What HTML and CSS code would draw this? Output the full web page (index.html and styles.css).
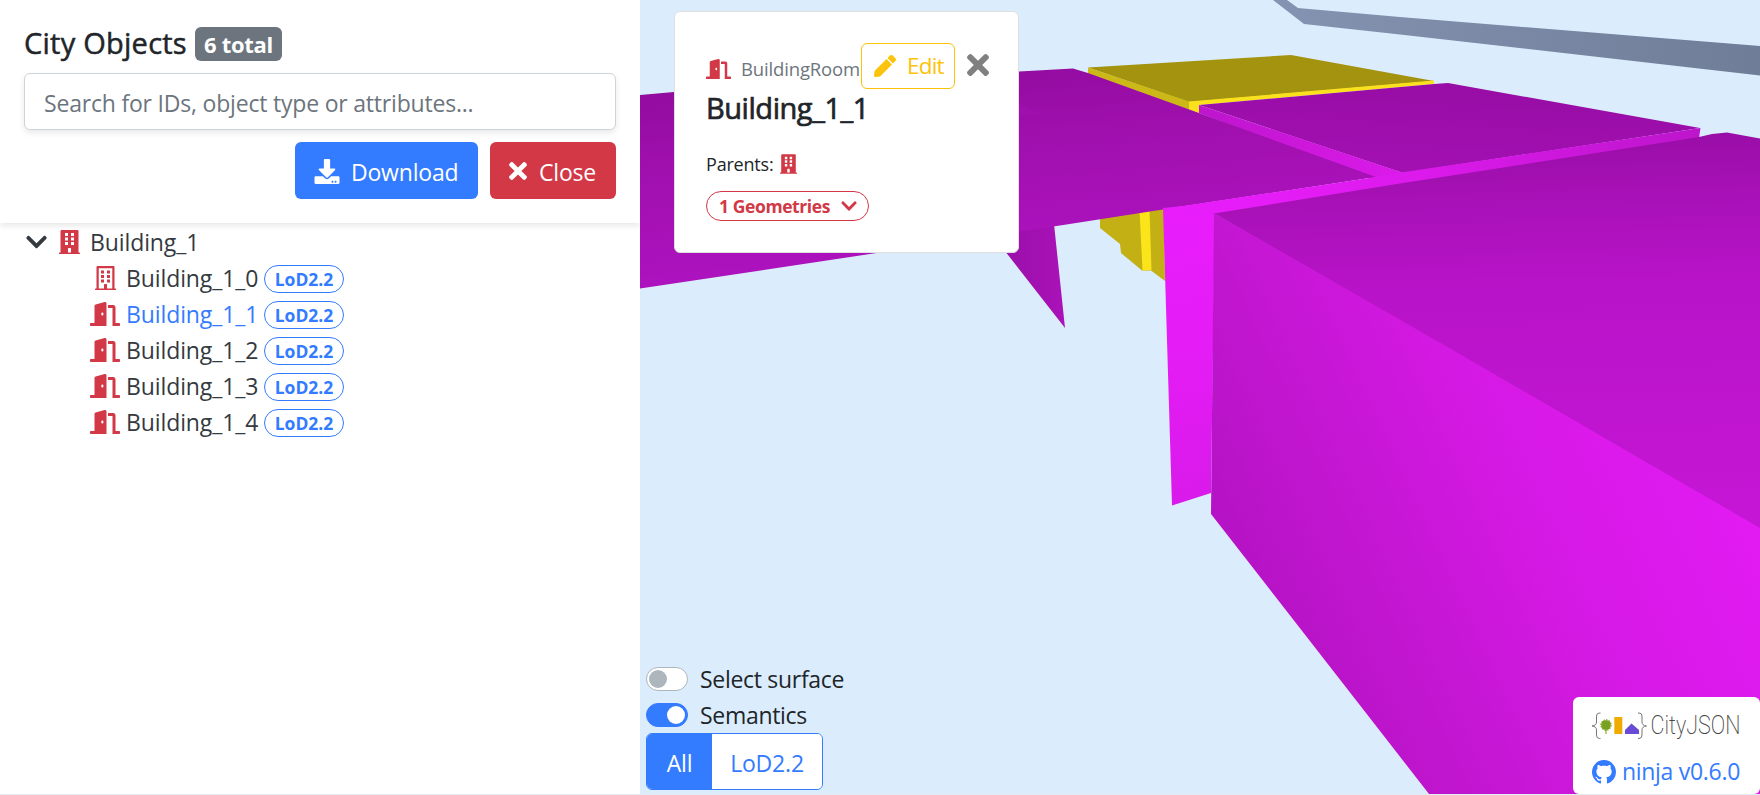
FILE: index.html
```html
<!DOCTYPE html>
<html lang="en">
<head>
<meta charset="utf-8">
<title>ninja</title>
<link rel="stylesheet" href="styles.css">
</head>
<body>
<svg class="defs" width="0" height="0">
  <symbol id="chevron" viewBox="0 0 448 512"><path d="M207.029 381.476L12.686 187.132c-9.373-9.373-9.373-24.569 0-33.941l22.667-22.667c9.357-9.357 24.522-9.375 33.901-.04L224 284.505l154.745-154.021c9.379-9.335 24.544-9.317 33.901.04l22.667 22.667c9.373 9.373 9.373 24.569 0 33.941L240.971 381.476c-9.373 9.372-24.569 9.372-33.942 0z"/></symbol>
  <symbol id="building" viewBox="0 0 448 512"><path fill-rule="evenodd" d="M436 480h-20V24c0-13.255-10.745-24-24-24H56C42.745 0 32 10.745 32 24v456H12c-6.627 0-12 5.373-12 12v20h448v-20c0-6.627-5.373-12-12-12zM128 64h64v64h-64zM256 64h64v64h-64zM128 160h64v64h-64zM256 160h64v64h-64zM128 256h64v64h-64zM256 256h64v64h-64zM192 396c0-6.600 5.400-12 12-12h40c6.600 0 12 5.400 12 12v84h-64z"/></symbol>
  <symbol id="building-o" viewBox="0 0 448 512"><path fill-rule="evenodd" d="M436 480h-20V24c0-13.255-10.745-24-24-24H56C42.745 0 32 10.745 32 24v456H12c-6.627 0-12 5.373-12 12v20h448v-20c0-6.627-5.373-12-12-12zM79.500 47H368.500V480H256v-84c0-6.600-5.400-12-12-12h-40c-6.600 0-12 5.400-12 12v84H79.500z"/><path d="M128 96h64v64h-64zM256 96h64v64h-64zM128 192h64v64h-64zM256 192h64v64h-64zM128 288h64v64h-64zM256 288h64v64h-64z"/></symbol>
  <symbol id="door" viewBox="0 0 640 512"><path d="M624 448h-80V113.450C544 86.190 522.470 64 496 64H384v64h96v384h144c8.840 0 16-7.160 16-16v-32c0-8.840-7.160-16-16-16zM312.240 1.010l-192 49.740C105.990 54.440 96 67.700 96 82.920V448H16c-8.840 0-16 7.160-16 16v32c0 8.840 7.160 16 16 16h336V33.180c0-21.580-19.560-37.410-39.760-32.170zM264 288c-13.250 0-24-14.330-24-32s10.750-32 24-32 24 14.330 24 32-10.750 32-24 32z"/></symbol>
  <symbol id="times" viewBox="0 0 352 512"><path d="M242.720 256l100.070-100.070c12.280-12.280 12.280-32.190 0-44.480l-22.240-22.240c-12.280-12.280-32.190-12.280-44.480 0L176 189.280 75.930 89.210c-12.280-12.280-32.190-12.280-44.480 0L9.210 111.450c-12.280 12.280-12.280 32.190 0 44.480L109.280 256 9.210 356.070c-12.280 12.280-12.280 32.190 0 44.480l22.240 22.240c12.280 12.280 32.200 12.280 44.480 0L176 322.720l100.070 100.070c12.280 12.280 32.200 12.280 44.480 0l22.240-22.240c12.280-12.280 12.280-32.190 0-44.480L242.720 256z"/></symbol>
  <symbol id="download" viewBox="0 0 512 512"><path d="M216 0h80c13.300 0 24 10.700 24 24v168h87.700c17.800 0 26.700 21.500 14.100 34.100L269.700 378.300c-7.500 7.500-19.800 7.500-27.300 0L90.100 226.100c-12.600-12.600-3.700-34.100 14.100-34.100H192V24c0-13.300 10.700-24 24-24zm296 376v112c0 13.300-10.700 24-24 24H24c-13.300 0-24-10.700-24-24V376c0-13.300 10.700-24 24-24h146.700l49 49c20.100 20.100 52.500 20.100 72.600 0l49-49H488c13.300 0 24 10.700 24 24zm-124 88c0-11-9-20-20-20s-20 9-20 20 9 20 20 20 20-9 20-20zm64 0c0-11-9-20-20-20s-20 9-20 20 9 20 20 20 20-9 20-20z"/></symbol>
  <symbol id="pen" viewBox="0 0 512 512"><path d="M290.740 93.240l128.020 128.020-277.990 277.990-114.140 12.600C11.350 513.540-1.560 500.620.14 485.340l12.700-114.220 277.900-277.880zm207.200-19.060l-60.110-60.110c-18.750-18.750-49.160-18.750-67.910 0l-56.550 56.550 128.020 128.020 56.550-56.550c18.750-18.760 18.750-49.160 0-67.910z"/></symbol>
  <symbol id="github" viewBox="0 0 16 16"><path d="M8 0C3.580 0 0 3.580 0 8c0 3.540 2.290 6.530 5.470 7.590.4.070.55-.17.55-.38 0-.19-.01-.82-.01-1.490-2.010.37-2.530-.49-2.690-.94-.09-.23-.48-.94-.82-1.130-.28-.15-.68-.52-.01-.53.63-.01 1.080.58 1.230.82.72 1.210 1.870.87 2.330.66.07-.52.28-.87.51-1.070-1.780-.2-3.640-.89-3.640-3.950 0-.87.31-1.590.82-2.150-.08-.2-.36-1.020.08-2.120 0 0 .67-.21 2.200.82.64-.18 1.320-.27 2-.27.68 0 1.360.09 2 .27 1.530-1.040 2.200-.82 2.200-.82.44 1.100.16 1.920.08 2.120.51.56.82 1.270.82 2.150 0 3.070-1.870 3.750-3.650 3.950.29.25.54.73.54 1.480 0 1.070-.01 1.930-.01 2.200 0 .21.15.46.55.38A8.013 8.013 0 0 0 16 8c0-4.420-3.580-8-8-8z"/></symbol>
</svg>
<div class="app">
  <aside class="sidebar">
    <header class="panel-head">
      <h5 class="panel-title"><span class="panel-name">City Objects</span><span class="count">6 total</span></h5>
      <input class="search" type="text" placeholder="Search for IDs, object type or attributes...">
      <div class="actions">
        <button class="btn btn-primary"><svg class="ic-sq"><use href="#download"/></svg><span>Download</span></button>
        <button class="btn btn-danger"><svg class="ic-times"><use href="#times"/></svg><span>Close</span></button>
      </div>
    </header>
    <ul class="tree">
      <li class="row root"><svg class="ic-b chev"><use href="#chevron"/></svg><svg class="ic-b"><use href="#building"/></svg><span class="name">Building_1</span></li>
      <li class="row"><span class="slot"><svg class="ic-b"><use href="#building-o"/></svg></span><span class="name">Building_1_0</span><span class="lod">LoD2.2</span></li>
      <li class="row active"><span class="slot"><svg class="ic-door"><use href="#door"/></svg></span><span class="name">Building_1_1</span><span class="lod">LoD2.2</span></li>
      <li class="row"><span class="slot"><svg class="ic-door"><use href="#door"/></svg></span><span class="name">Building_1_2</span><span class="lod">LoD2.2</span></li>
      <li class="row"><span class="slot"><svg class="ic-door"><use href="#door"/></svg></span><span class="name">Building_1_3</span><span class="lod">LoD2.2</span></li>
      <li class="row"><span class="slot"><svg class="ic-door"><use href="#door"/></svg></span><span class="name">Building_1_4</span><span class="lod">LoD2.2</span></li>
    </ul>
  </aside>
  <main class="viewer">
    <svg class="scene" viewBox="640 0 1120 794">
      <defs>
        <linearGradient id="g-left" gradientUnits="userSpaceOnUse" x1="1000" y1="68" x2="1015" y2="250"><stop offset="0" stop-color="#930ca0"/><stop offset=".4" stop-color="#a010ae"/><stop offset="1" stop-color="#ac12bd"/></linearGradient>
        <linearGradient id="g-tri" gradientUnits="userSpaceOnUse" x1="1006" y1="253" x2="1062" y2="253"><stop offset="0" stop-color="#9b0fa9"/><stop offset="1" stop-color="#a912b8"/></linearGradient>
        <linearGradient id="g-mid" gradientUnits="userSpaceOnUse" x1="1450" y1="83" x2="1445" y2="178"><stop offset="0" stop-color="#970da5"/><stop offset="1" stop-color="#a410b3"/></linearGradient>
        <linearGradient id="g-strip" gradientUnits="userSpaceOnUse" x1="1199" y1="105" x2="1403" y2="173"><stop offset="0" stop-color="#bd15cc"/><stop offset="1" stop-color="#db1aea"/></linearGradient>
        <linearGradient id="g-edge" gradientUnits="userSpaceOnUse" x1="1163" y1="209" x2="1700" y2="128"><stop offset="0" stop-color="#e91dfc"/><stop offset=".3" stop-color="#e21cf3"/><stop offset=".5" stop-color="#da1aea"/><stop offset="1" stop-color="#bd15cc"/></linearGradient>
        <linearGradient id="g-pillar" gradientUnits="userSpaceOnUse" x1="1170" y1="210" x2="1210" y2="500"><stop offset="0" stop-color="#e91dfc"/><stop offset=".5" stop-color="#e41cf5"/><stop offset="1" stop-color="#d91aea"/></linearGradient>
        <linearGradient id="g-top" gradientUnits="userSpaceOnUse" x1="1560" y1="128" x2="1570" y2="520"><stop offset="0" stop-color="#970da5"/><stop offset=".18" stop-color="#a811b7"/><stop offset=".4" stop-color="#b813c8"/><stop offset="1" stop-color="#c516d5"/></linearGradient>
        <linearGradient id="g-face" gradientUnits="userSpaceOnUse" x1="1250" y1="560" x2="1700" y2="352"><stop offset="0" stop-color="#b713c6"/><stop offset=".2" stop-color="#c116d0"/><stop offset=".55" stop-color="#d519e4"/><stop offset="1" stop-color="#e31bf4"/></linearGradient>
        <linearGradient id="g-beam" gradientUnits="userSpaceOnUse" x1="1280" y1="0" x2="1760" y2="60"><stop offset="0" stop-color="#8593b2"/><stop offset="1" stop-color="#6f7d98"/></linearGradient>
      </defs>
      <path fill="url(#g-beam)" d="M1273 0L1304 24L1400 34.500L1760 75.500V46L1400 17L1298 8L1287 0z"/>
      <path fill="#c3b015" d="M1100 216V228L1120 244L1121 253L1142 270.500H1151L1165 281L1164 206z"/>
      <path fill="#fce41b" d="M1139.500 210H1149.500L1151.500 270L1142.500 270.500z"/>
      <path fill="#a3930f" d="M1088 67.500L1291 55L1434 81L1189 102z"/>
      <path fill="#ccb917" d="M1088 67.500L1189 101.500V110L1088 73.500z"/>
      <path fill="#fae01d" d="M1189 101.500L1434 80.500V84L1199.500 105V114L1189 110z"/>
      <path fill="url(#g-mid)" d="M1199 105L1434 84L1448 83L1700 128L1403 173z"/>
      <path fill="url(#g-strip)" d="M1199 105L1402 172.500L1405 176L1376 180L1199 113z"/>
      <path fill="url(#g-tri)" d="M987 228L1065 328L1054 224z"/>
      <path fill="url(#g-left)" d="M640 95L674 92L1019 71.500L1073 68.500L1088 73L1199 113L1376 177L1163 209.500L1060 225.500L640 288.500z"/>
      <path fill="#a211b1" opacity=".6" d="M1000 94L1041 114L1000 117z"/>
      <path fill="url(#g-pillar)" d="M1163 208L1215 203L1211 493L1172 505.500z"/>
      <path fill="url(#g-edge)" d="M1163 209L1376 177L1401 172.500L1700.500 128L1699 138L1214 215z"/>
      <path fill="url(#g-top)" d="M1214 213.500L1400 183.500L1699 137L1712 134L1727 132.500L1760 138.500V530z"/>
      <path fill="url(#g-face)" d="M1214 213L1450 348.500L1677 480L1760 528V794H1429L1380 731L1211 514z"/>
    </svg>
    <section class="card">
      <div class="card-top">
        <svg class="ic-door sm"><use href="#door"/></svg><span class="kind">BuildingRoom</span>
        <button class="btn btn-edit"><svg class="ic-pen"><use href="#pen"/></svg><span>Edit</span></button>
        <svg class="ic-x"><use href="#times"/></svg>
      </div>
      <h5 class="card-title">Building_1_1</h5>
      <div class="parents"><span>Parents:</span><svg class="ic-bs"><use href="#building"/></svg></div>
      <span class="geoms"><span>1 Geometries</span><svg class="ic-cs"><use href="#chevron"/></svg></span>
    </section>
    <section class="controls">
      <label class="switch"><span class="track"><i class="knob"></i></span><span>Select surface</span></label>
      <label class="switch on"><span class="track"><i class="knob"></i></span><span>Semantics</span></label>
      <div class="group"><button class="seg seg-on">All</button><button class="seg seg-lod">LoD2.2</button></div>
    </section>
    <section class="brand">
      <svg class="logo" viewBox="0 0 160 32" width="160" height="32">
        <g fill="none" stroke="#777" stroke-width="1"><path d="M8.500 1H7.500Q4.500 1 4.500 4V10Q4.500 13.500 0 14Q4.500 14.500 4.500 18V23Q4.500 26.500 7.500 26.500H8.500"/><path d="M46 1H47Q50 1 50 4V10Q50 13.500 54.500 14Q50 14.500 50 18V23Q50 26.500 47 26.500H46"/></g>
        <path d="M14 14V22" stroke="#86ad2c" stroke-width="1.200"/>
        <circle cx="14" cy="13" r="4.800" fill="#7aa01f"/><circle cx="14" cy="13" r="5.100" fill="none" stroke="#7aa01f" stroke-width="1.200" stroke-dasharray="1.600 1"/>
        <path d="M22.300 5H30.300V22H22.300z" fill="#efab00"/>
        <path d="M39.500 11.500L47 18V22H33V18z" fill="#6a4bd6"/>
        <text x="58.500" y="22" textLength="90" lengthAdjust="spacingAndGlyphs" class="logo-text">CityJSON</text>
      </svg>
      <a class="repo"><svg class="ic-gh"><use href="#github"/></svg><span>ninja v0.6.0</span></a>
    </section>
  </main>
</div>
</body>
</html>
```
FILE: styles.css
```css
* { box-sizing: border-box; }
body {
  margin: 0;
  width: 1760px;
  height: 795px;
  overflow: hidden;
  background: #e4ebf2;
  color: #212529;
  font-family: "Open Sans", "Noto Sans", sans-serif;
  font-size: 23px;
  letter-spacing: -0.2px;
  line-height: 36px;
}
svg { fill: currentColor; flex: none; display: block; }
.defs { position: absolute; }
button, input { font: inherit; letter-spacing: inherit; margin: 0; }
.app { display: flex; height: 794px; }
.sidebar { width: 640px; background: #fff; }
.panel-head {
  height: 223px;
  padding: 23px 24px 0;
  box-shadow: 0 3px 6px rgba(0, 0, 0, .09);
}
.panel-title {
  display: flex;
  align-items: center;
  margin: 0 0 10px;
  height: 40px;
  font-size: 29px;
  font-weight: 400;
  letter-spacing: 0.25px;
}
.panel-name { width: 171px; margin-top: -1px; white-space: nowrap; -webkit-text-stroke: 0.5px currentColor; }
.count {
  width: 87px;
  height: 34px;
  margin-top: 2px;
  border-radius: 6px;
  background: #6c757d;
  color: #fff;
  font-size: 22px;
  font-weight: 700;
  letter-spacing: -0.3px;
  line-height: 34px;
  text-align: center;
}
.search {
  display: block;
  width: 592px;
  height: 57px;
  padding: 2px 19px 0;
  border: 1px solid #ced4da;
  border-radius: 6px;
  box-shadow: 0 3px 6px rgba(0, 0, 0, .09);
  background: #fff;
}
.search::placeholder { color: #6c757d; opacity: 1; }
.actions { display: flex; justify-content: flex-end; gap: 12px; margin-top: 12px; }
.btn {
  display: flex;
  flex: none;
  align-items: center;
  height: 57px;
  padding: 2px 0 0 19px;
  border: 0;
  border-radius: 6px;
  color: #fff;
  white-space: nowrap;
}
.btn-primary { width: 183px; background: #337bff; gap: 11px; }
.btn-danger { width: 126px; background: #d23846; gap: 12px; }
.ic-sq { width: 26px; height: 25px; margin-top: -1px; }
.ic-times { width: 18px; height: 26px; margin-top: -1px; }
.tree { list-style: none; margin: 0; padding: 1px 0 0; color: #343a40; }
.row { display: flex; align-items: center; height: 36px; padding-left: 90px; }
.root { padding-left: 26px; }
.name { width: 132px; margin-left: 6px; letter-spacing: -0.1px; white-space: nowrap; }
.root .name { margin-left: 10px; }
.ic-b { width: 21px; height: 24px; color: #d23846; margin-top: -1px; }
.chev { margin-right: 12px; color: #343a40; }
.slot { width: 30px; display: flex; justify-content: center; }
.ic-door { width: 30px; height: 24px; margin-top: -1px; color: #d23846; }
.active .name { color: #337bff; }
.lod {
  width: 80px;
  height: 28px;
  margin: 2px 0 0 6px;
  border: 1px solid #337bff;
  border-radius: 14px;
  color: #337bff;
  font-size: 17.500px;
  font-weight: 700;
  letter-spacing: 0;
  line-height: 27px;
  text-align: center;
}
.viewer { position: relative; width: 1120px; background: #dbedfc; overflow: hidden; }
.scene { width: 1120px; height: 794px; }
.card {
  position: absolute;
  left: 34px;
  top: 11px;
  width: 345px;
  height: 242px;
  padding: 31px 31px 0;
  border: 1px solid #dfdfdf;
  border-radius: 6px;
  background: #fff;
}
.card-top { display: flex; align-items: center; height: 46px; }
.ic-door.sm { width: 25px; height: 20px; margin-top: 5px; }
.kind {
  flex: none;
  width: 119px;
  margin: 6px 1px 0 10px;
  color: #6c757d;
  font-size: 18.500px;
  letter-spacing: -0.15px;
  white-space: nowrap;
}
.btn-edit {
  width: 94px;
  height: 46px;
  padding: 0 0 0 12px;
  gap: 11px;
  border: 1px solid #fbc30c;
  background: #fff;
  color: #fbc30c;
  font-size: 22.500px;
  letter-spacing: -0.8px;
}
.ic-pen { width: 22px; height: 22px; margin-top: 0; }
.ic-x { width: 22px; height: 32px; margin: -2px 0 0 12px; color: #808080; }
.card-title {
  margin: 0;
  font-size: 29px;
  font-weight: 400;
  line-height: 38px;
  letter-spacing: -0.450px;
  -webkit-text-stroke: 0.7px currentColor;
}
.parents { display: flex; align-items: center; gap: 7px; margin-top: 19px; height: 36px; font-size: 18px; }
.ic-bs { width: 17px; height: 20px; color: #d23846; }
.geoms {
  display: flex;
  align-items: center;
  width: 163px;
  height: 30px;
  margin-top: 9px;
  padding-left: 12px;
  gap: 11px;
  border: 1px solid #d23846;
  border-radius: 15px;
  color: #d23846;
  font-size: 17.500px;
  font-weight: 700;
  letter-spacing: -0.4px;
  white-space: nowrap;
}
.ic-cs { width: 16px; height: 18px; }
.controls { position: absolute; left: 6px; top: 660px; }
.switch { display: flex; gap: 12px; height: 36px; align-items: center; letter-spacing: -0.3px; white-space: nowrap; }
.switch span + span { margin-top: 2px; }
.track {
  width: 42px;
  height: 24px;
  margin-top: 1px;
  padding: 2px;
  border: 1px solid #adb5bd;
  border-radius: 12px;
  background: #fff;
}
.knob { display: block; width: 18px; height: 18px; border-radius: 50%; background: #adb5bd; }
.on .track { border-color: #337bff; background: #337bff; }
.on .knob { margin-left: 18px; background: #fff; }
.group { display: flex; width: 177px; height: 57px; margin-top: 1px; border: 1px solid #337bff; border-radius: 6px; overflow: hidden; }
.seg { border: 0; padding: 2px 0 0; background: #fff; color: #337bff; }
.seg-on { width: 65px; background: #337bff; color: #fff; }
.seg-lod { flex: 1; }
.brand {
  position: absolute;
  left: 933px;
  top: 697px;
  width: 187px;
  height: 97px;
  padding: 15px 0 0 19px;
  border-radius: 6px;
  background: #fff;
}
.logo { overflow: visible; }
.logo-text { font-family: Roboto, sans-serif; font-size: 25px; font-weight: 200; letter-spacing: 0; fill: #444; }
.repo { display: flex; align-items: center; gap: 6px; margin-top: 9px; color: #337bff; letter-spacing: -0.3px; white-space: nowrap; }
.ic-gh { width: 24px; height: 24px; margin-top: 2px; }
```
